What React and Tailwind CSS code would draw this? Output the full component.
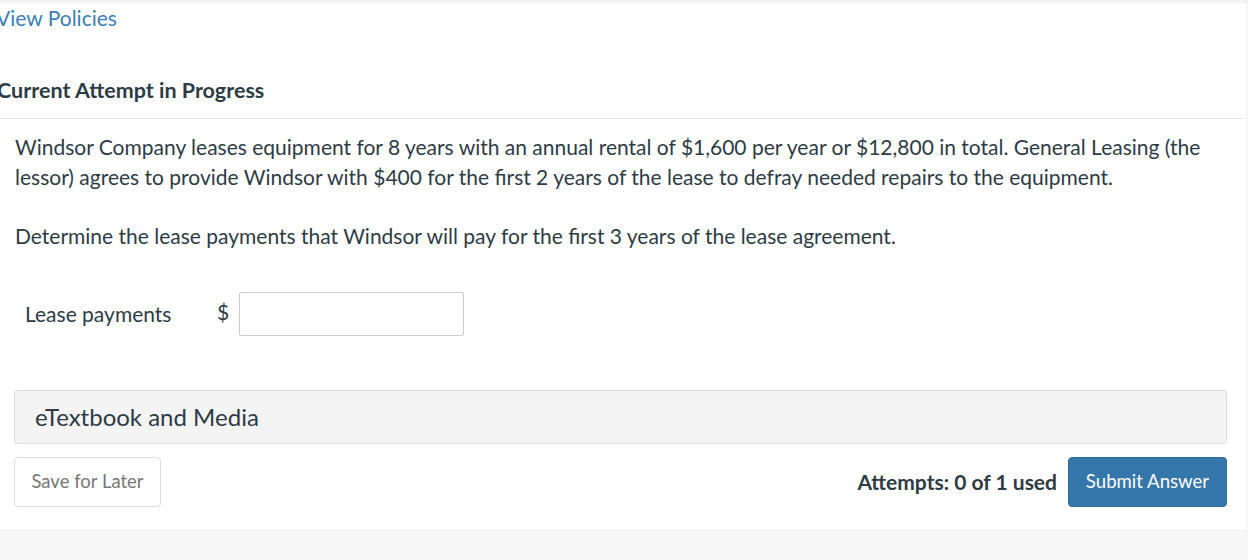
import React from 'react';

const App = () => {
  return (
    <div className="h-[560px] w-[1248px] overflow-hidden bg-[#f7f7f7] text-[#2d3b45]" style={{ fontFamily: 'Lato, "Open Sans", sans-serif' }}>
      {/* top strip */}
      <div className="h-[3px] bg-[#f3f3f3]" />

      {/* main panel */}
      <div className="mr-[2px] h-[526px] bg-white">
        <div className="h-[30px] leading-[30px] -ml-[4px] text-[21px] text-[#3a7fb6] whitespace-nowrap">View Policies</div>

        <div className="mt-[42px] border-b border-[#e6e6e6] pb-[13px]">
          <h2 className="h-[30px] leading-[30px] -ml-[3px] text-[21.5px] font-bold text-[#2d3b45] whitespace-nowrap">Current Attempt in Progress</h2>
        </div>

        <div className="pl-[15px] pr-[20px] pt-[13px] text-[21px] leading-[30px]">
          <p className="mb-[29px]">
            Windsor Company leases equipment for 8 years with an annual rental of $1,600 per year or $12,800 in total. General Leasing (the
            lessor) agrees to provide Windsor with $400 for the first 2 years of the lease to defray needed repairs to the equipment.
          </p>
          <p>Determine the lease payments that Windsor will pay for the first 3 years of the lease agreement.</p>
        </div>

        <div className="mt-[41px] flex h-[44px] items-center">
          <span className="ml-[25px] w-[192px] text-[21px]">Lease payments</span>
          <span className="w-[22px] text-[21px] -mt-[4px]">$</span>
          <input type="text" className="h-[44px] w-[225px] rounded-[2px] border border-[#cccccc] bg-white outline-none" />
        </div>

        <div className="ml-[14px] mt-[54px] flex h-[54px] w-[1213px] items-center rounded-[3px] border border-[#dddddd] bg-[#f4f4f4] pl-[20px] text-[24px] text-[#2d3b45]">
          eTextbook and Media
        </div>

        <div className="ml-[14px] mt-[13px] flex w-[1213px] items-center justify-between">
          <button className="h-[50px] w-[147px] rounded-[4px] border border-[#dddddd] bg-white text-[18.5px] text-[#777777]">
            Save for Later
          </button>
          <div className="flex items-center gap-[11px]">
            <span className="text-[21px] font-bold text-[#2d3b45]">Attempts: 0 of 1 used</span>
            <button className="h-[50px] w-[159px] rounded-[4px] border border-[#2e6b9e] bg-[#3576ab] text-[18.6px] text-white">
              Submit Answer
            </button>
          </div>
        </div>
      </div>
    </div>
  );
};

export default App;
